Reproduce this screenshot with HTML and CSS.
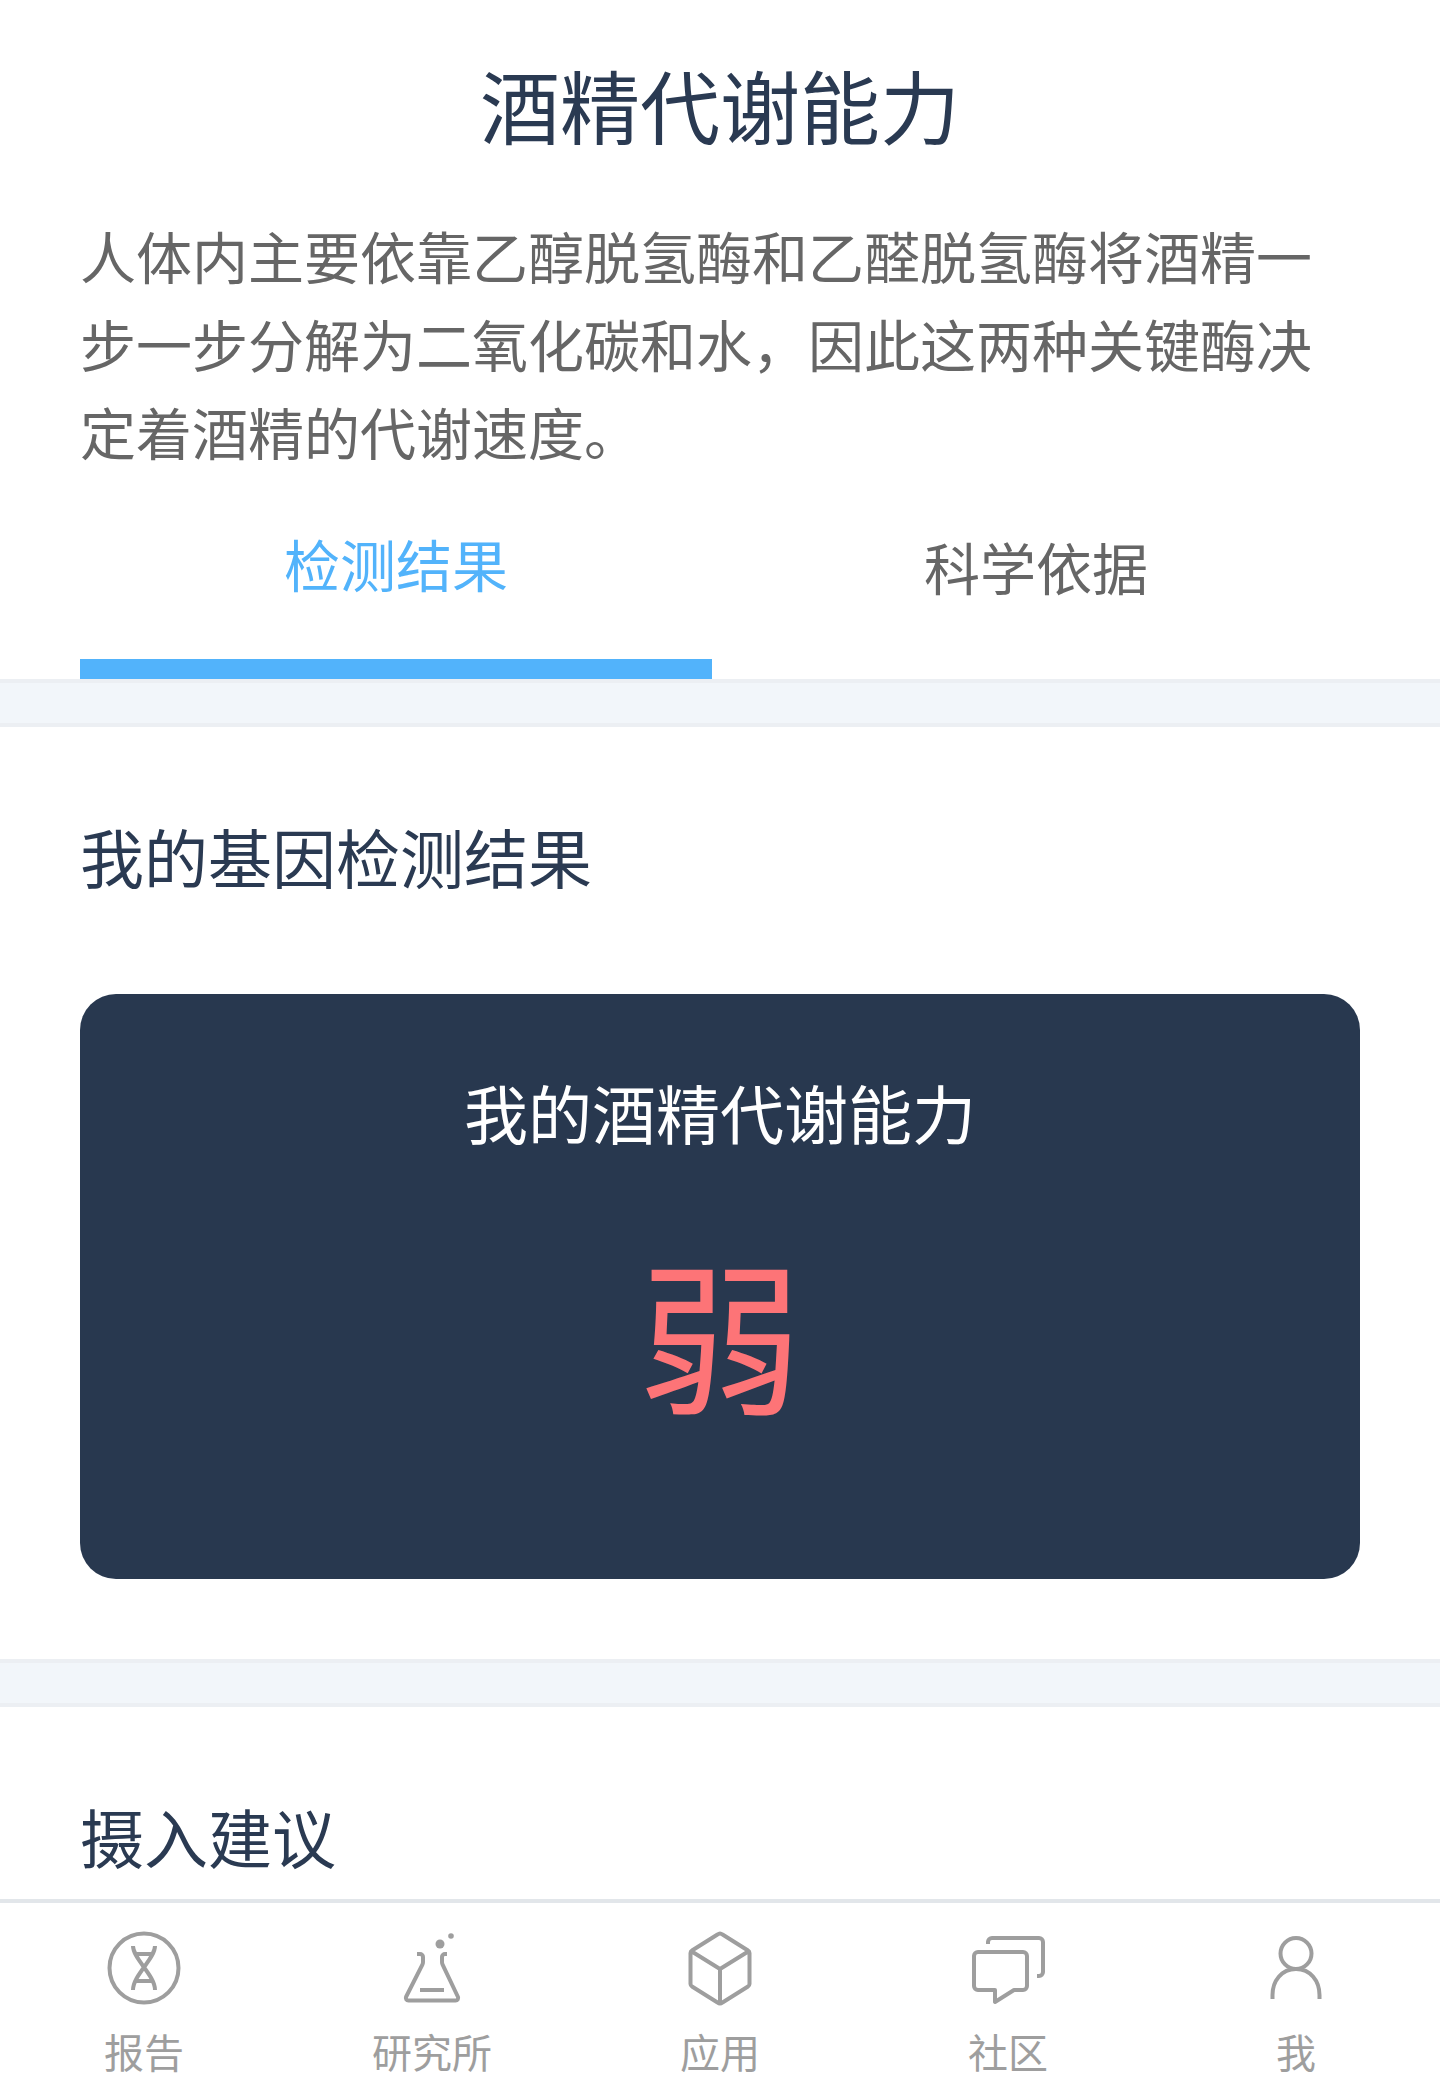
FILE: index.html
```html
<!DOCTYPE html>
<html lang="zh-CN">
<head>
<meta charset="UTF-8">
<meta name="viewport" content="width=device-width, initial-scale=1.0">
<title>酒精代谢能力</title>
<link rel="stylesheet" href="styles.css">
</head>
<body>
<div class="page">
<div class="content">
<div class="intro">
<h1 class="intro-title">酒精代谢能力</h1>
<p class="intro-desc">人体内主要依靠乙醇脱氢酶和乙醛脱氢酶将酒精一步一步分解为二氧化碳和水，因此这两种关键酶决定着酒精的代谢速度。</p>
</div>
<div class="tabs">
<div class="tab-item active">检测结果</div>
<div class="tab-item">科学依据</div>
</div>
<div class="gap"></div>
<div class="section">
<h2 class="section-title">我的基因检测结果</h2>
<div class="result-card">
<div class="result-card-title">我的酒精代谢能力</div>
<div class="result-card-value">弱</div>
</div>
</div>
<div class="gap"></div>
<div class="section">
<h2 class="section-title">摄入建议</h2>
</div>
</div>
<div class="tabbar">
<div class="tabbar-item">
<svg class="tabbar-icon" viewBox="0 0 80 80"><circle cx="40" cy="40" r="34.5"/><path d="M29 18C29 31 51 47 51 62M51 18C51 31 29 47 29 62M30 26h20M30 53h20"/></svg>
<div class="tabbar-label">报告</div>
</div>
<div class="tabbar-item">
<svg class="tabbar-icon" viewBox="0 0 80 80"><path d="M25 26h3a3 3 0 0 1 3 3v5a6 6 0 0 1-.6 2.6L14 69a2.6 2.6 0 0 0 2.4 3.6h47.2A2.600 2.600 0 0 0 66 69L50.600 36.600A6 6 0 0 1 50 34v-5a3 3 0 0 1 3-3h2M28 62h24"/><circle class="fill" cx="48" cy="16" r="4.500"/><circle class="fill" cx="59" cy="8" r="2.800"/></svg>
<div class="tabbar-label">研究所</div>
</div>
<div class="tabbar-item">
<svg class="tabbar-icon" viewBox="0 0 80 80"><path d="M37.500 6.500 12 22.500a3 3 0 0 0-1.500 2.500v31a3 3 0 0 0 1.500 2.500l25.500 16a4 4 0 0 0 5 0L68 58.500a3 3 0 0 0 1.500-2.500V25a3 3 0 0 0-1.500-2.500L42.500 6.500a4 4 0 0 0-5 0zM11 23l29 18 29-18M40 41v34"/></svg>
<div class="tabbar-label">应用</div>
</div>
<div class="tabbar-item">
<svg class="tabbar-icon" viewBox="0 0 80 80"><path d="M10 24h45a4 4 0 0 1 4 4v30a4 4 0 0 1-4 4h-9L27 74V62H10a4 4 0 0 1-4-4V28a4 4 0 0 1 4-4zM20 16v-2a4 4 0 0 1 4-4h47a4 4 0 0 1 4 4v30a4 4 0 0 1-4 4h-2"/></svg>
<div class="tabbar-label">社区</div>
</div>
<div class="tabbar-item">
<svg class="tabbar-icon" viewBox="0 0 80 80"><circle cx="40" cy="25.500" r="15.500"/><path d="M16.500 71v-4c0-14 9-26 23.500-26s23.500 12 23.500 26v4"/></svg>
<div class="tabbar-label">我</div>
</div>
</div>
</div>
</body>
</html>
```

FILE: styles.css
```css
html,body{
margin:0px;
padding:0px;
background:#fff;
width:100%;
height:100%;
}
*{font-family:"Noto Sans CJK SC","Noto Sans",sans-serif;}
.page{
width:1440px;
height:2099px;
display:flex;
flex-direction:column;
overflow:hidden;
}
.content{
flex-grow:1;
min-height:0;
overflow:hidden;
}
.intro{
padding:43px 80px 0px;
}
.intro-title{
margin:0px;
font-size:80px;
font-weight:400;
line-height:120px;
text-align:center;
color:#2a3a52;
}
.intro-desc{
margin:48px 0px 0px;
font-size:56px;
line-height:88px;
color:#666;
}
.tabs{
display:flex;
padding:0px 80px;
height:204px;
}
.tab-item{
flex:1;
display:flex;
align-items:center;
justify-content:center;
font-size:56px;
color:#666;
padding-bottom:23px;
box-sizing:border-box;
}
.tab-item.active{
flex:none;
width:632px;
color:#52b3fb;
padding-bottom:10px;
border-bottom:20px solid #52b3fb;
}
.gap{
height:40px;
background:#f2f6fa;
border-top:4px solid #eceff3;
border-bottom:4px solid #eceff3;
}
.section{
padding:80px 80px;
}
.section-title{
margin:0px;
font-size:64px;
font-weight:400;
line-height:96px;
color:#2a3a52;
}
.result-card{
margin-top:91px;
height:585px;
border-radius:36px;
background:#28384f;
display:flex;
flex-direction:column;
align-items:center;
}
.result-card-title{
margin-top:69px;
font-size:64px;
line-height:96px;
color:#fff;
}
.result-card-value{
margin-top:62px;
font-size:164px;
line-height:220px;
color:#fd7477;
}
.tabbar{
flex:none;
height:200px;
box-sizing:border-box;
border-top:4px solid #e2e6ea;
background:#fff;
display:flex;
}
.tabbar-item{
flex:1;
display:flex;
flex-direction:column;
align-items:center;
padding-top:25px;
}
.tabbar-icon{
width:80px;
height:80px;
fill:none;
stroke:#9e9e9e;
stroke-width:4;
stroke-linejoin:round;
}
.tabbar-icon .fill{
fill:#9e9e9e;
stroke:none;
}
.tabbar-label{
margin-top:15px;
font-size:40px;
line-height:56px;
color:#9e9e9e;
}
```
